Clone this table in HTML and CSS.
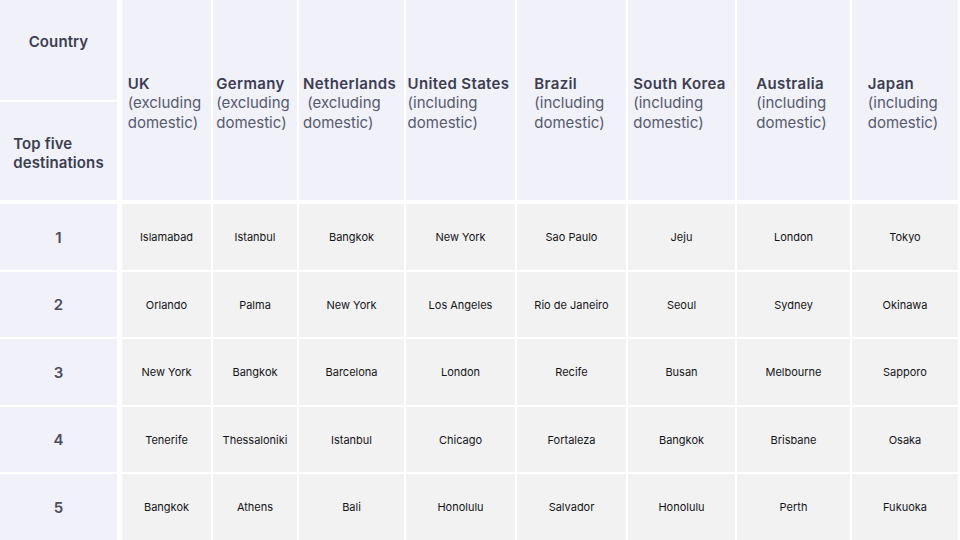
FILE: index.html
```html
<!DOCTYPE html>
<html>
<head>
<meta charset="utf-8">
<link rel="stylesheet" href="styles.css">
</head>
<body>
<div class="table">
  <div class="head">
    <div class="cell corner top"><span class="in">Country</span></div>
    <div class="cell hc"><span class="in"><b>UK</b><br>(excluding<br>domestic)</span></div>
    <div class="cell hc"><span class="in"><b>Germany</b><br>(excluding<br>domestic)</span></div>
    <div class="cell hc"><span class="in"><b>Netherlands</b><br>&nbsp;(excluding<br>domestic)</span></div>
    <div class="cell hc"><span class="in"><b>United States</b><br>(including<br>domestic)</span></div>
    <div class="cell hc"><span class="in"><b>Brazil</b><br>(including<br>domestic)</span></div>
    <div class="cell hc"><span class="in"><b>South Korea</b><br>(including<br>domestic)</span></div>
    <div class="cell hc"><span class="in"><b>Australia</b><br>(including<br>domestic)</span></div>
    <div class="cell hc"><span class="in"><b>Japan</b><br>(including<br>domestic)</span></div>
    <div class="cell corner bottom"><span class="in">Top five<br>destinations</span></div>
  </div>
  <div class="body">
    <div class="cell rank">1</div>
    <div class="cell d">Islamabad</div><div class="cell d">Istanbul</div><div class="cell d">Bangkok</div><div class="cell d">New York</div><div class="cell d">Sao Paulo</div><div class="cell d">Jeju</div><div class="cell d">London</div><div class="cell d">Tokyo</div>
    <div class="cell rank">2</div>
    <div class="cell d">Orlando</div><div class="cell d">Palma</div><div class="cell d">New York</div><div class="cell d">Los Angeles</div><div class="cell d">Rio de Janeiro</div><div class="cell d">Seoul</div><div class="cell d">Sydney</div><div class="cell d">Okinawa</div>
    <div class="cell rank">3</div>
    <div class="cell d">New York</div><div class="cell d">Bangkok</div><div class="cell d">Barcelona</div><div class="cell d">London</div><div class="cell d">Recife</div><div class="cell d">Busan</div><div class="cell d">Melbourne</div><div class="cell d">Sapporo</div>
    <div class="cell rank">4</div>
    <div class="cell d">Tenerife</div><div class="cell d">Thessaloniki</div><div class="cell d">Istanbul</div><div class="cell d">Chicago</div><div class="cell d">Fortaleza</div><div class="cell d">Bangkok</div><div class="cell d">Brisbane</div><div class="cell d">Osaka</div>
    <div class="cell rank">5</div>
    <div class="cell d">Bangkok</div><div class="cell d">Athens</div><div class="cell d">Bali</div><div class="cell d">Honolulu</div><div class="cell d">Salvador</div><div class="cell d">Honolulu</div><div class="cell d">Perth</div><div class="cell d">Fukuoka</div>
  </div>
</div>
</body>
</html>
```
FILE: styles.css
```css
* { box-sizing: border-box; }
html, body { margin: 0; padding: 0; background: #ffffff; }
body {
  width: 960px;
  height: 540px;
  overflow: hidden;
  font-family: Inter, "Liberation Sans", sans-serif;
}
.table {
  display: flex;
  flex-direction: column;
  gap: 4px;
  width: 960px;
}
.head, .body {
  display: grid;
  grid-template-columns: 120px 89px 84px 105px 109px 109px 107px 113px 106px;
  column-gap: 2px;
}
.head {
  grid-template-rows: 100px 98px;
  row-gap: 2px;
}
.body {
  grid-template-rows: 66px 65px 66px 65px 66px;
  row-gap: 2px;
}
.cell {
  display: flex;
  align-items: center;
  justify-content: center;
}
.in {
  display: inline-block;
  text-align: left;
  white-space: nowrap;
}
.corner {
  grid-column: 1;
  background: #f0f1f9;
  border-right: 3px solid #ffffff;
  color: #3c3e52;
  font-weight: 600;
  font-size: 15px;
  line-height: 19px;
  letter-spacing: 0.1px;
}
.corner.top { grid-row: 1; padding-bottom: 18px; }
.corner.bottom { grid-row: 2; padding-top: 4px; }
.hc {
  grid-row: 1 / span 2;
  background: #f0f1f9;
  color: #565a6d;
  font-size: 15px;
  line-height: 19.5px;
  padding-top: 6px;
  padding-right: 4px;
}
.hc b {
  color: #3c3e52;
  font-weight: 600;
  letter-spacing: 0.35px;
}
.rank {
  background: #f0f1f9;
  border-right: 3px solid #ffffff;
  color: #4a4c5f;
  font-weight: 600;
  font-size: 15px;
}
.d {
  background: #f2f2f2;
  color: #141418;
  font-size: 11px;
}
```
